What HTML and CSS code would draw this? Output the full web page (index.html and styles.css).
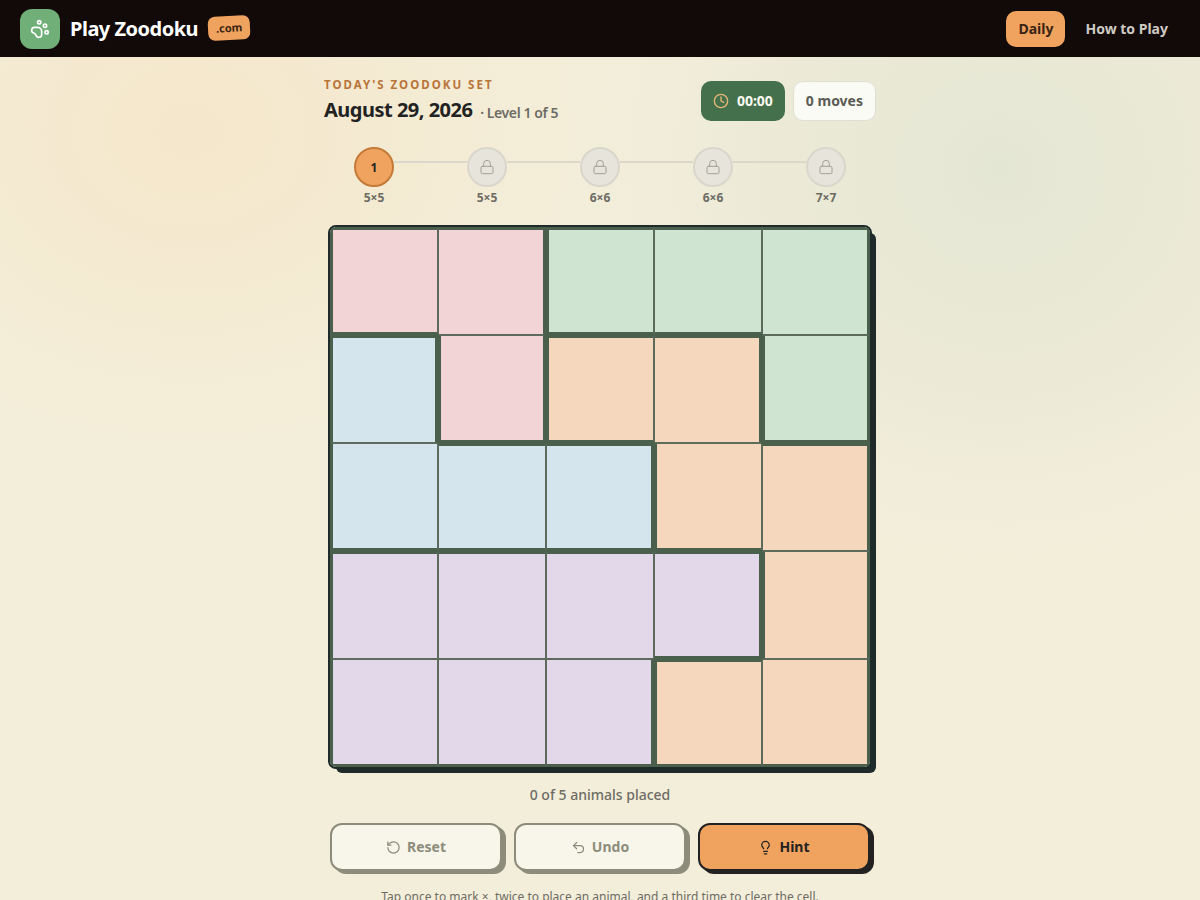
FILE: index.html
```html
<!doctype html>
<html lang="en">
    <head>
        <meta charset="UTF-8" />
        <meta name="viewport" content="width=device-width, initial-scale=1" />

        <link rel="stylesheet" href="styles.css">

        <title>Play Zoodoku</title>
    </head>
    <body>
        <header class="topbar">
            <a class="brand" href="#">
                <span class="brand-logo">
                    <svg class="icon-paw" viewBox="0 0 24 24">
                        <circle cx="11" cy="4" r="2" />
                        <circle cx="18" cy="8" r="2" />
                        <circle cx="20" cy="16" r="2" />
                        <path d="M9 10a5 5 0 0 1 5 5v3.5a3.5 3.5 0 0 1-6.84 1.045Q6.52 17.48 4.46 16.84A3.5 3.5 0 0 1 5.5 10Z" />
                    </svg>
                </span>
                <span class="brand-name">Play Zoodoku</span>
                <span class="brand-tag">.com</span>
            </a>
            <nav class="topnav">
                <a class="topnav-link active" href="#">Daily</a>
                <a class="topnav-link" href="#">How to Play</a>
            </nav>
        </header>

        <main class="game">
            <section class="game-head">
                <div class="game-title">
                    <p class="eyebrow">Today's Zoodoku Set</p>
                    <h1>August 29, 2026 <span class="level-note">· Level 1 of 5</span></h1>
                </div>
                <div class="game-stats">
                    <div class="stat stat-timer">
                        <svg class="icon icon-clock" viewBox="0 0 24 24">
                            <circle cx="12" cy="12" r="10" />
                            <polyline points="12 6 12 12 16 14" />
                        </svg>
                        00:00
                    </div>
                    <div class="stat stat-moves">0 moves</div>
                </div>
            </section>

            <!-- Level progress -->
            <section class="levels">
                <div class="level">
                    <span class="level-dot current">1</span>
                    <span class="level-size">5×5</span>
                </div>
                <span class="level-line"></span>
                <div class="level">
                    <span class="level-dot">
                        <svg class="icon icon-lock" viewBox="0 0 24 24">
                            <rect x="3" y="11" width="18" height="11" rx="2" />
                            <path d="M7 11V7a5 5 0 0 1 10 0v4" />
                        </svg>
                    </span>
                    <span class="level-size">5×5</span>
                </div>
                <span class="level-line"></span>
                <div class="level">
                    <span class="level-dot">
                        <svg class="icon icon-lock" viewBox="0 0 24 24">
                            <rect x="3" y="11" width="18" height="11" rx="2" />
                            <path d="M7 11V7a5 5 0 0 1 10 0v4" />
                        </svg>
                    </span>
                    <span class="level-size">6×6</span>
                </div>
                <span class="level-line"></span>
                <div class="level">
                    <span class="level-dot">
                        <svg class="icon icon-lock" viewBox="0 0 24 24">
                            <rect x="3" y="11" width="18" height="11" rx="2" />
                            <path d="M7 11V7a5 5 0 0 1 10 0v4" />
                        </svg>
                    </span>
                    <span class="level-size">6×6</span>
                </div>
                <span class="level-line"></span>
                <div class="level">
                    <span class="level-dot">
                        <svg class="icon icon-lock" viewBox="0 0 24 24">
                            <rect x="3" y="11" width="18" height="11" rx="2" />
                            <path d="M7 11V7a5 5 0 0 1 10 0v4" />
                        </svg>
                    </span>
                    <span class="level-size">7×7</span>
                </div>
            </section>

            <!-- t r b l = thick edge on that side, where two regions meet -->
            <section class="board">
                <div class="cell pink t b l"></div>
                <div class="cell pink t r"></div>
                <div class="cell green t b l"></div>
                <div class="cell green t b"></div>
                <div class="cell green t r"></div>

                <div class="cell blue t r l"></div>
                <div class="cell pink r b l"></div>
                <div class="cell orange t b l"></div>
                <div class="cell orange t r"></div>
                <div class="cell green r b l"></div>

                <div class="cell blue b l"></div>
                <div class="cell blue t b"></div>
                <div class="cell blue t r b"></div>
                <div class="cell orange b l"></div>
                <div class="cell orange t r"></div>

                <div class="cell violet t l"></div>
                <div class="cell violet t"></div>
                <div class="cell violet t"></div>
                <div class="cell violet t r b"></div>
                <div class="cell orange r l"></div>

                <div class="cell violet b l"></div>
                <div class="cell violet b"></div>
                <div class="cell violet r b"></div>
                <div class="cell orange t b l"></div>
                <div class="cell orange r b"></div>
            </section>

            <p class="placed">0 of 5 animals placed</p>

            <section class="actions">
                <button class="btn muted">
                    <svg class="icon" viewBox="0 0 24 24">
                        <path d="M3 12a9 9 0 1 0 9-9 9.75 9.75 0 0 0-6.74 2.74L3 8" />
                        <path d="M3 3v5h5" />
                    </svg>
                    Reset
                </button>
                <button class="btn muted">
                    <svg class="icon" viewBox="0 0 24 24">
                        <path d="M9 14 4 9l5-5" />
                        <path d="M4 9h10.5a5.5 5.5 0 0 1 5.5 5.5a5.5 5.5 0 0 1-5.5 5.5H11" />
                    </svg>
                    Undo
                </button>
                <button class="btn hint">
                    <svg class="icon" viewBox="0 0 24 24">
                        <path d="M15 14c.2-1 .7-1.7 1.5-2.5 1-.9 1.5-2.2 1.5-3.5A6 6 0 0 0 6 8c0 1 .2 2.2 1.5 3.5.7.7 1.3 1.5 1.5 2.5" />
                        <path d="M9 18h6" />
                        <path d="M10 22h4" />
                    </svg>
                    Hint
                </button>
            </section>

            <p class="tip">Tap once to mark ×, twice to place an animal, and a third time to clear the cell.</p>
        </main>
    </body>
</html>
```

FILE: styles.css
```css
* {
    box-sizing: border-box;
}
body,
h1,
p {
    margin: 0;
    padding: 0;
}
a {
    text-decoration: none;
    color: inherit;
}
body {
    font-family: "Noto Sans", sans-serif;
    color: #222222;
    background-color: #f3eeda;
    background-image:
        radial-gradient(ellipse 420px 340px at 190px 130px, #f5e7cb, transparent),
        radial-gradient(ellipse 420px 400px at 1000px 170px, #e4e6d4, transparent);
    background-repeat: no-repeat;
}

/* -- TOP BAR -- */

.topbar {
    height: 57px;
    padding: 0 20px;
    display: flex;
    align-items: center;
    justify-content: space-between;
    background-color: #120a08;
}
.brand {
    display: flex;
    align-items: center;
}
.brand-logo {
    width: 40px;
    height: 40px;
    margin-right: 10px;
    border-radius: 12px;
    display: flex;
    align-items: center;
    justify-content: center;
    background-color: #70b078;
}
.icon-paw {
    width: 20px;
    height: 20px;
    fill: none;
    stroke: #ffffff;
    stroke-width: 2;
}
.brand-name {
    font-size: 20px;
    font-weight: 700;
    letter-spacing: -0.5px;
    color: #ffffff;
}
.brand-tag {
    margin-left: 10px;
    margin-bottom: 2px;
    padding: 3px 8px;
    border-radius: 7px;
    font-size: 11px;
    font-weight: 700;
    line-height: 18px;
    color: #3a2414;
    background-color: #f0a35e;
    transform: rotate(-3deg);
}
.topnav {
    display: flex;
    align-items: center;
    gap: 8px;
}
.topnav-link {
    padding: 0 12px;
    height: 36px;
    border-radius: 10px;
    font-size: 14px;
    font-weight: 700;
    line-height: 35px;
    color: #cfcac4;
}
.topnav-link.active {
    color: #3a2414;
    background-color: #f0a35e;
}

/* -- GAME -- */

.game {
    width: 552px;
    margin: 0 auto;
    padding-top: 24px;
}
.game-head {
    display: flex;
    justify-content: space-between;
    align-items: center;
    height: 40px;
}
.game-title {
    padding-top: 2px;
}
.eyebrow {
    font-size: 11.5px;
    font-weight: 700;
    line-height: 16px;
    letter-spacing: 2px;
    text-transform: uppercase;
    color: #b9743a;
}
h1 {
    margin-top: 3px;
    font-size: 20px;
    font-weight: 700;
    line-height: 28px;
    letter-spacing: -0.5px;
}
.level-note {
    margin-left: 3px;
    font-size: 14px;
    font-weight: 600;
    letter-spacing: -0.4px;
    vertical-align: -1px;
    color: #6d6c64;
}
.game-stats {
    display: flex;
    gap: 8px;
}
.stat {
    height: 40px;
    padding: 0 12px 1px;
    border-radius: 10px;
    display: flex;
    align-items: center;
    font-size: 14px;
    font-weight: 700;
}
.stat-timer {
    gap: 8px;
    color: #fafaf2;
    background-color: #44704c;
}
.stat-moves {
    border: 1px solid #dfdfd6;
    color: #5b5b55;
    background-color: #fbfbf6;
}
.icon {
    width: 16px;
    height: 16px;
    fill: none;
    stroke: currentColor;
    stroke-width: 2;
    stroke-linecap: round;
    stroke-linejoin: round;
}
.stat-timer .icon {
    margin-top: 1px;
}
.icon-clock {
    color: #e6b877;
}

/* -- LEVELS -- */

.levels {
    margin-top: 26px;
    display: flex;
    justify-content: center;
    height: 78px;
}
.level {
    width: 40px;
    display: flex;
    flex-direction: column;
    align-items: center;
}
.level-dot {
    width: 40px;
    height: 40px;
    flex: none;
    border: 2px solid #d9d6cc;
    border-radius: 50%;
    display: flex;
    align-items: center;
    justify-content: center;
    font-size: 12px;
    font-weight: 700;
    background-color: #e7e4dc;
}
.level-dot.current {
    border-color: #c47a38;
    background-color: #f0a35e;
}
.icon-lock {
    width: 16px;
    height: 16px;
    stroke-width: 1.5;
    color: #a3a097;
}
.level-size {
    margin-top: 3px;
    font-size: 12px;
    font-weight: 700;
    line-height: 16px;
    color: #6d6c64;
}
.level-line {
    width: 73px;
    height: 2px;
    margin-top: 14px;
    background-color: #dbd7ca;
}

/* -- BOARD -- */

.board {
    width: 544px;
    height: 544px;
    margin: 0 auto;
    border: 2px solid #1f2a2a;
    border-radius: 8px;
    overflow: hidden;
    display: grid;
    grid-template-columns: repeat(5, 108px);
    grid-template-rows: repeat(5, 108px);
    box-shadow: 6px 6px 0 -2px #1f2a2a;
    background-color: #4b5f4d;
}
.cell {
    border: 1px solid #5c6b5c;
}
.cell.t {
    border-top: 3px solid #4b5f4d;
}
.cell.r {
    border-right: 3px solid #4b5f4d;
}
.cell.b {
    border-bottom: 3px solid #4b5f4d;
}
.cell.l {
    border-left: 3px solid #4b5f4d;
}
.pink {
    background-color: #f2d3d6;
}
.green {
    background-color: #cfe5d2;
}
.blue {
    background-color: #d4e5ee;
}
.orange {
    background-color: #f5d7bd;
}
.violet {
    background-color: #e3d8ea;
}
.placed {
    margin-top: 16px;
    font-size: 14px;
    font-weight: 500;
    line-height: 20px;
    text-align: center;
    color: #6d6c64;
}

/* -- BUTTONS -- */

.actions {
    width: 540px;
    margin: 18px auto 0;
    display: grid;
    grid-template-columns: repeat(3, 172px);
    gap: 12px;
}
.btn {
    height: 48px;
    padding-bottom: 2px;
    border: 2px solid #8d8c7b;
    border-radius: 12px;
    display: flex;
    align-items: center;
    justify-content: center;
    gap: 6px;
    font-family: inherit;
    font-size: 14px;
    font-weight: 700;
    color: #8d8c7b;
    background-color: #f8f6ea;
    box-shadow: 4px 3px 0 #8d8c7b;
}
.btn .icon {
    width: 15px;
    height: 15px;
    margin-top: 1px;
}
.btn.hint {
    border-color: #222222;
    color: #222222;
    background-color: #f0a35e;
    box-shadow: 4px 3px 0 #222222;
}
.tip {
    margin-top: 17px;
    font-size: 12px;
    line-height: 18px;
    text-align: center;
    color: #6d6c64;
}
```
